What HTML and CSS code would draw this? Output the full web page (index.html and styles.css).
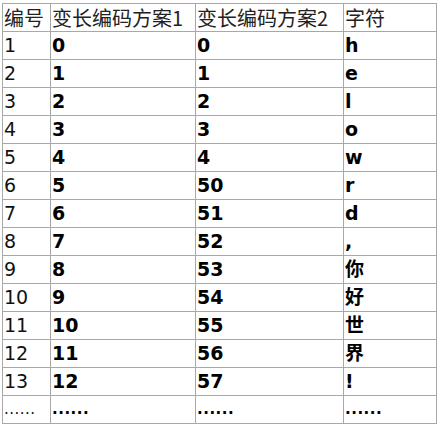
FILE: index.html
```html
<!DOCTYPE html>
<html lang="zh">
<head>
<meta charset="utf-8">
<link rel="stylesheet" href="styles.css">
</head>
<body>
<table class="code-table">
  <colgroup>
    <col class="c-id"><col class="c-a"><col class="c-b"><col class="c-ch">
  </colgroup>
  <thead>
    <tr><th>编号</th><th>变长编码方案1</th><th>变长编码方案2</th><th>字符</th></tr>
  </thead>
  <tbody>
    <tr><td>1</td><td class="b">0</td><td class="b">0</td><td class="b">h</td></tr>
    <tr><td>2</td><td class="b">1</td><td class="b">1</td><td class="b">e</td></tr>
    <tr><td>3</td><td class="b">2</td><td class="b">2</td><td class="b">l</td></tr>
    <tr><td>4</td><td class="b">3</td><td class="b">3</td><td class="b">o</td></tr>
    <tr><td>5</td><td class="b">4</td><td class="b">4</td><td class="b">w</td></tr>
    <tr><td>6</td><td class="b">5</td><td class="b">50</td><td class="b">r</td></tr>
    <tr><td>7</td><td class="b">6</td><td class="b">51</td><td class="b">d</td></tr>
    <tr><td>8</td><td class="b">7</td><td class="b">52</td><td class="b">,</td></tr>
    <tr><td>9</td><td class="b">8</td><td class="b">53</td><td class="b">你</td></tr>
    <tr><td>10</td><td class="b">9</td><td class="b">54</td><td class="b">好</td></tr>
    <tr><td>11</td><td class="b">10</td><td class="b">55</td><td class="b">世</td></tr>
    <tr><td>12</td><td class="b">11</td><td class="b">56</td><td class="b">界</td></tr>
    <tr><td>13</td><td class="b">12</td><td class="b">57</td><td class="b">!</td></tr>
    <tr><td class="dots">......</td><td class="b dots">......</td><td class="b dots">......</td><td class="b dots">......</td></tr>
  </tbody>
</table>
</body>
</html>
```
FILE: styles.css
```css
html, body {
  margin: 0;
  padding: 0;
  background: #ffffff;
}
body {
  padding: 3px 0 0 2px;
}
.code-table {
  border-collapse: collapse;
  table-layout: fixed;
  width: 434px;
  font-family: "DejaVu Sans", "Noto Sans CJK SC", sans-serif;
  font-size: 19px;
  color: #111111;
  border: 1px solid #9a9a9a;
}
.c-id { width: 48px; }
.c-a { width: 145px; }
.c-b { width: 148px; }
.c-ch { width: 93px; }
.code-table th,
.code-table td {
  border: 1px solid #a8a8a8;
  height: 27px;
  padding: 0 0 0 1px;
  text-align: left;
  vertical-align: middle;
  line-height: 27px;
  white-space: nowrap;
  overflow: hidden;
}
.code-table th {
  font-weight: normal;
  font-family: "Noto Sans CJK SC", "DejaVu Sans", sans-serif;
  font-size: 20px;
  color: #222222;
}
.code-table td.b {
  font-weight: bold;
  color: #000000;
}
.code-table td.dots {
  font-size: 15px;
  letter-spacing: 0.5px;
}
```
